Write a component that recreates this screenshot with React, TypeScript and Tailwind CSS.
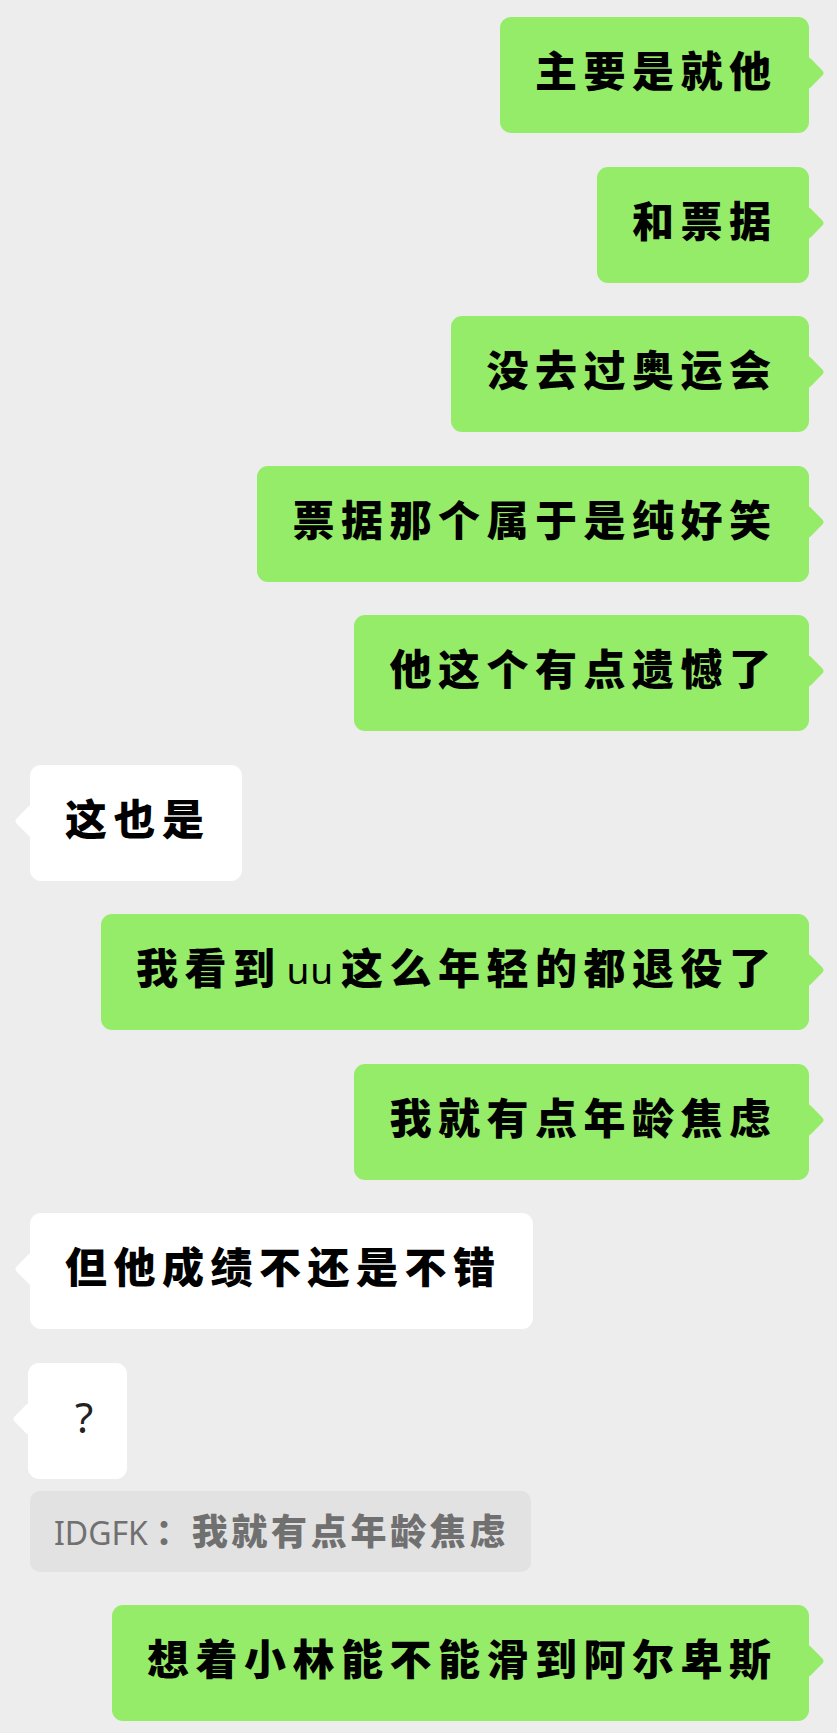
const cjk = "font-['Noto_Sans_CJK_SC','Noto_Sans',sans-serif]";

function Bubble({ side, children, className = "" }: { side: "left" | "right"; children: React.ReactNode; className?: string }) {
  const mine = side === "right";
  return (
    <div
      className={`relative flex h-[116px] items-start rounded-[11px] pl-[35px] pr-[31.5px] pt-[24px] ${
        mine ? "self-end bg-[#95ec69]" : "self-start bg-white"
      } ${className}`}
    >
      <div
        className={`absolute top-[44px] h-[24px] w-[24px] rotate-45 rounded-[4px] ${
          mine ? "right-[-11px] bg-[#95ec69]" : "left-[-11px] bg-white"
        }`}
      />
      <span className="relative whitespace-nowrap text-[42px] font-black leading-[56px] tracking-[6.5px] text-black">
        {children}
      </span>
    </div>
  );
}

export default function App() {
  return (
    <div className={`flex h-[1733px] w-[837px] flex-col bg-[#ededed] pl-[30px] pr-[28px] pt-[17px] ${cjk}`}>
      <Bubble side="right">主要是就他</Bubble>
      <Bubble side="right" className="mt-[33.5px]">和票据</Bubble>
      <Bubble side="right" className="mt-[33.5px]">没去过奥运会</Bubble>
      <Bubble side="right" className="mt-[33.5px]">票据那个属于是纯好笑</Bubble>
      <Bubble side="right" className="mt-[33.5px]">他这个有点遗憾了</Bubble>
      <Bubble side="left" className="mt-[33.5px]">这也是</Bubble>
      <Bubble side="right" className="mt-[33.5px]">
        我看到
        <span className="inline-block w-[59.5px] pl-[5px] font-['Noto_Sans',sans-serif] text-[37px] font-normal tracking-[1px]">uu</span>
        这么年轻的都退役了
      </Bubble>
      <Bubble side="right" className="mt-[33.5px]">我就有点年龄焦虑</Bubble>
      <Bubble side="left" className="mt-[33.5px]">但他成绩不还是不错</Bubble>
      <Bubble side="left" className="ml-[-2px] mt-[33.5px] w-[99px] pl-[47px]">
        <span className="font-['Noto_Sans',sans-serif] font-normal text-[#222]">?</span>
      </Bubble>
      <div className="mt-[12px] flex h-[81px] w-[501px] items-center rounded-[10px] bg-[#e2e2e2] pl-[24px]">
        <span className="whitespace-nowrap text-[36px] leading-[48px] text-[#707070]">
          <span className="font-['Noto_Sans',sans-serif] text-[32px] font-normal">IDGFK</span>
          <span className="ml-[7px] mr-[-3px] font-bold tracking-[3.7px]">：</span>
          <span className="font-black tracking-[3.7px]">我就有点年龄焦虑</span>
        </span>
      </div>
      <Bubble side="right" className="mt-[33.5px]">想着小林能不能滑到阿尔卑斯</Bubble>
    </div>
  );
}
